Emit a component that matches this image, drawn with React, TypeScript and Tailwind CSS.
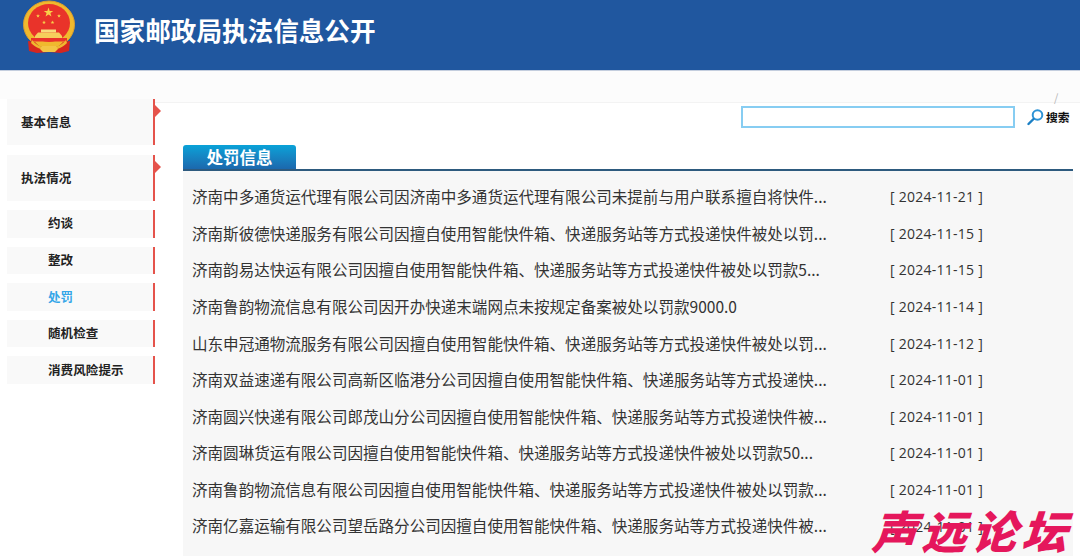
const subNav = ["约谈", "整改", "处罚", "随机检查", "消费风险提示"]

const rows = [
  ["济南中多通货运代理有限公司因济南中多通货运代理有限公司未提前与用户联系擅自将快件...", "2024-11-21"],
  ["济南斯彼德快递服务有限公司因擅自使用智能快件箱、快递服务站等方式投递快件被处以罚...", "2024-11-15"],
  ["济南韵易达快运有限公司因擅自使用智能快件箱、快递服务站等方式投递快件被处以罚款5...", "2024-11-15"],
  ["济南鲁韵物流信息有限公司因开办快递末端网点未按规定备案被处以罚款9000.0", "2024-11-14"],
  ["山东申冠通物流服务有限公司因擅自使用智能快件箱、快递服务站等方式投递快件被处以罚...", "2024-11-12"],
  ["济南双益速递有限公司高新区临港分公司因擅自使用智能快件箱、快递服务站等方式投递快...", "2024-11-01"],
  ["济南圆兴快递有限公司郎茂山分公司因擅自使用智能快件箱、快递服务站等方式投递快件被...", "2024-11-01"],
  ["济南圆琳货运有限公司因擅自使用智能快件箱、快递服务站等方式投递快件被处以罚款50...", "2024-11-01"],
  ["济南鲁韵物流信息有限公司因擅自使用智能快件箱、快递服务站等方式投递快件被处以罚款...", "2024-11-01"],
  ["济南亿嘉运输有限公司望岳路分公司因擅自使用智能快件箱、快递服务站等方式投递快件被...", "2024-11-01"],
]

function Star({ x, y, r }: { x: number; y: number; r: number }) {
  const pts = Array.from({ length: 10 }, (_, i) => {
    const a = (Math.PI / 5) * i - Math.PI / 2
    const d = i % 2 === 0 ? r : r * 0.4
    return `${(x + d * Math.cos(a)).toFixed(2)},${(y + d * Math.sin(a)).toFixed(2)}`
  }).join(" ")
  return <polygon points={pts} fill="#f8d24a" />
}

function Emblem() {
  return (
    <svg width="54" height="56" viewBox="0 0 54 56" className="block">
      <ellipse cx="26" cy="24.5" rx="25.5" ry="23.5" fill="#f0b92e" stroke="#dc9f2c" strokeWidth="1" />
      <ellipse cx="26" cy="23" rx="21" ry="19" fill="#e9332a" />
      <Star x={25.5} y={12.5} r={5} />
      <Star x={15} y={16} r={2} />
      <Star x={36} y={16} r={2} />
      <Star x={21} y={22.5} r={2} />
      <Star x={29.5} y={22.5} r={2} />
      <rect x="18" y="29.5" width="15" height="3" fill="#f8dc7c" />
      <path d="M15 32.5h21l3 3.5v2H12v-2z" fill="#f6cf5c" />
      <rect x="8" y="38" width="36" height="3.5" fill="#e9332a" />
      <path d="M5 41l7 1 5 5 9 2 9-2 5-5 7-1 -1 10-8 2-12-1-12 1-8-2z" fill="#d5261f" />
      <path d="M9 40c5 6 11 8 17 8s12-2 17-8l1 3c-5 5-11 7-18 7S13 48 8 43z" fill="#efb62f" />
      <path d="M19 46h14l2 3-3 3h-12l-3-3z" fill="#f3c544" />
    </svg>
  )
}

function SearchIcon() {
  return (
    <svg width="17" height="18" viewBox="0 0 17 18" className="block">
      <circle cx="10.5" cy="7" r="4.8" fill="#fff" stroke="#2d93d6" strokeWidth="2" />
      <path d="M6.5 11L1.5 16" stroke="#1b7fc4" strokeWidth="2.4" strokeLinecap="round" />
    </svg>
  )
}

function SideItem({ label, big, active }: { label: string; big?: boolean; active?: boolean }) {
  return (
    <div
      className={
        big
          ? "relative flex h-[46px] items-center border-r-2 border-[#e5534b] bg-[#f9f9f9] pl-[14px] text-[12.5px] tracking-[0.1px] font-bold text-[#222]"
          : `flex h-[27.5px] items-center border-r-2 border-[#e5534b] bg-[#f9f9f9] pl-[41px] text-[12.5px] tracking-[0.1px] font-bold ${active ? "text-[#35a6e8]" : "text-[#222]"}`
      }
    >
      {label}
      {big && (
        <span className="absolute right-[-8px] top-[6px] h-0 w-0 border-y-[6px] border-l-[6px] border-y-transparent border-l-[#e5534b]" />
      )}
    </div>
  )
}

export default function App() {
  return (
    <div className="relative h-[556px] w-[1080px] overflow-hidden bg-white font-['Noto_Sans_CJK_SC',sans-serif]">
      <header className="flex h-[71px] items-start border-b border-[#c4cede] bg-[#20579f] pl-[23px]">
        <Emblem />
        <h1 className="ml-[17px] mt-[11px] text-[25.6px] leading-[38px] font-bold text-white">国家邮政局执法信息公开</h1>
      </header>

      <div className="flex">
        <aside className="w-[155px] shrink-0 pl-[7px]">
          <div className="-ml-[7px] h-[28px] bg-[#fcfcfc]" />
          <SideItem label="基本信息" big />
          <div className="mt-[10px]">
            <SideItem label="执法情况" big />
          </div>
          <div className="mt-[9px] flex flex-col gap-[9.1px]">
            {subNav.map((item) => (
              <SideItem key={item} label={item} active={item === "处罚"} />
            ))}
          </div>
        </aside>

        <main className="min-w-0 flex-1">
          <div className="relative h-[32px] border-b border-[#f3f3f3] bg-[#fcfcfc]">
            <span className="absolute left-[899px] top-[20px] text-[11px] leading-[12px] text-[#b5b5b5]">/</span>
          </div>
          <div className="ml-[586px] mt-[3px] flex items-center">
            <div className="h-[22px] w-[274px] border-2 border-[#87cdf2] bg-white" />
            <div className="ml-[12px]">
              <SearchIcon />
            </div>
            <span className="ml-[2px] text-[11.8px] leading-[18px] font-bold text-[#111]">搜索</span>
          </div>

          <section className="ml-[28px] mr-[7px] mt-[17px]">
            <div className="border-b-2 border-[#2d5a7e]">
              <div className="flex h-[24px] w-[113px] items-center justify-center rounded-t-[3px] bg-gradient-to-b from-[#08a2d8] to-[#1b68ad] text-[16.5px] leading-none font-bold text-white">
                处罚信息
              </div>
            </div>
            <ul className="h-[400px] bg-[#f7f7f7] pl-[9px] pt-[7.5px]">
              {rows.map(([title, date]) => (
                <li key={title} className="flex h-[36.6px] items-center text-[#333]">
                  <span className="w-[698px] shrink-0 overflow-hidden text-[15.55px] whitespace-nowrap">{title}</span>
                  <span className="font-['Open_Sans',sans-serif] text-[14px] tracking-[0.25px]">[ {date} ]</span>
                </li>
              ))}
            </ul>
          </section>
        </main>
      </div>

      <div className="absolute left-[877px] top-[505px] -skew-x-[18deg] text-[45px] leading-[50px] font-black tracking-[5px] whitespace-nowrap text-[#e5175c]">
        声远论坛
      </div>
    </div>
  )
}
